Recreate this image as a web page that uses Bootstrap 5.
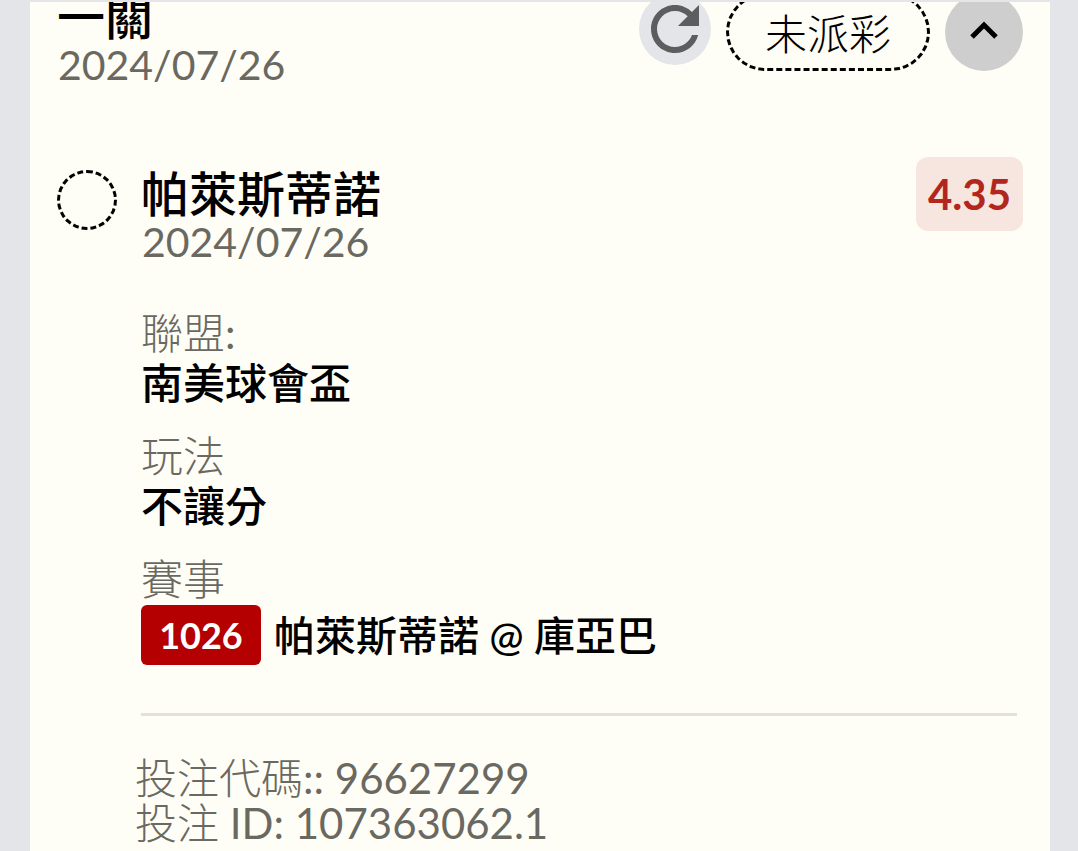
<!DOCTYPE html>
<html lang="zh-Hant">
<head>
<meta charset="utf-8">
<meta name="viewport" content="width=device-width, initial-scale=1">
<title>投注單</title>
<link href="https://cdn.jsdelivr.net/npm/bootstrap@5.3.0/dist/css/bootstrap.min.css" rel="stylesheet">
<style>
body{background:#e4e5e8;font-family:Lato,"Noto Sans CJK TC",sans-serif;font-size:42px;line-height:44px;color:#000;padding:2px 28px 0 30px;overflow-x:hidden}
.slip{background:#fffef6;min-height:calc(100vh - 2px);padding:0 27px 6px;overflow:hidden}
.slip-head{margin-top:-9px}
.slip-title{font-size:48px;line-height:48px;font-weight:500;margin:0}
.slip-date{font-size:41px;line-height:48px;padding-left:1px}
.muted-text{color:#6a6961}
.thin{font-weight:300}
.actions{gap:15px}
.round-btn{border:0;border-radius:50%;padding:0;display:flex;align-items:center;justify-content:center}
.refresh{width:72px;height:72px;background:#e4e5e8}
.toggle{width:78px;height:78px;background:#cecece}
.state{width:204px;height:78px;border:3px dashed #000;border-radius:39px;background:none;color:#000;padding:4px 0 0}
.leg{margin-top:68px}
.leg-name{padding-top:13px}
.leg-dot{width:60px;height:60px;border:3px dashed #000;border-radius:50%;margin-top:13px}
.odds{background:#f7e6df;color:#b3261e;border-radius:12px;width:107px;height:74px;font-weight:700}
.detail{margin-left:84px}
.info{margin-top:43px}
.info dt{font-weight:300;line-height:48px;color:#6a6961}
.info dd{font-weight:500;line-height:52px;margin-bottom:23px}
.match-row{padding-top:2px}
.match-no{background:#b40000;color:#fff;font-size:36px;font-weight:700;width:120px;height:60px;border-radius:6px;margin-right:13px}
.vs{font-size:41px;padding-top:2px}
.rule{border:0;border-top:3px solid #e4e1dc;opacity:1;margin:48px 6px 40px 0}
.codes{line-height:45px;margin-left:-6px}
</style>
</head>
<body>
<main class="slip">
  <header class="slip-head d-flex justify-content-between align-items-start">
    <div>
      <h1 class="slip-title">一關</h1>
      <div class="slip-date muted-text">2024/07/26</div>
    </div>
    <div class="actions d-flex align-items-start">
      <button class="round-btn refresh" type="button" aria-label="重新整理">
        <svg width="72" height="72" viewBox="0 0 24 24" aria-hidden="true"><path fill="#5c5d5f" d="M17.650 6.350C16.200 4.900 14.210 4 12 4c-4.420 0-7.990 3.580-7.990 8s3.570 8 7.990 8c3.730 0 6.840-2.550 7.730-6h-2.080c-.820 2.330-3.040 4-5.650 4-3.310 0-6-2.690-6-6s2.690-6 6-6c1.660 0 3.140.690 4.220 1.780L13 11h7V4l-2.350 2.350z"/></svg>
      </button>
      <button class="state thin" type="button">未派彩</button>
      <button class="round-btn toggle" type="button" aria-label="收合">
        <svg width="78" height="78" viewBox="0 0 78 78" aria-hidden="true"><path d="M27 44l12-12 12 12" fill="none" stroke="#000" stroke-width="5"/></svg>
      </button>
    </div>
  </header>
  <section class="leg">
    <div class="d-flex align-items-start">
      <div class="leg-dot flex-shrink-0 me-4"></div>
      <div class="leg-name flex-grow-1">
        <h2 class="slip-title">帕萊斯蒂諾</h2>
        <div class="slip-date muted-text">2024/07/26</div>
      </div>
      <div class="odds d-flex align-items-center justify-content-center">4.35</div>
    </div>
    <div class="detail">
      <dl class="info mb-0">
        <dt>聯盟<span class="fw-normal">:</span></dt>
        <dd>南美球會盃</dd>
        <dt>玩法</dt>
        <dd>不讓分</dd>
        <dt>賽事</dt>
        <dd class="match-row d-flex align-items-center mb-0"><span class="match-no d-flex align-items-center justify-content-center">1026</span><span class="vs">帕萊斯蒂諾 @ 庫亞巴</span></dd>
      </dl>
      <hr class="rule">
      <div class="codes muted-text">
        <div><span class="thin">投注代碼</span>:: 96627299</div>
        <div><span class="thin">投注</span> ID: 107363062.1</div>
      </div>
    </div>
  </section>
</main>
<script src="https://cdn.jsdelivr.net/npm/bootstrap@5.3.0/dist/js/bootstrap.bundle.min.js"></script>
</body>
</html>
